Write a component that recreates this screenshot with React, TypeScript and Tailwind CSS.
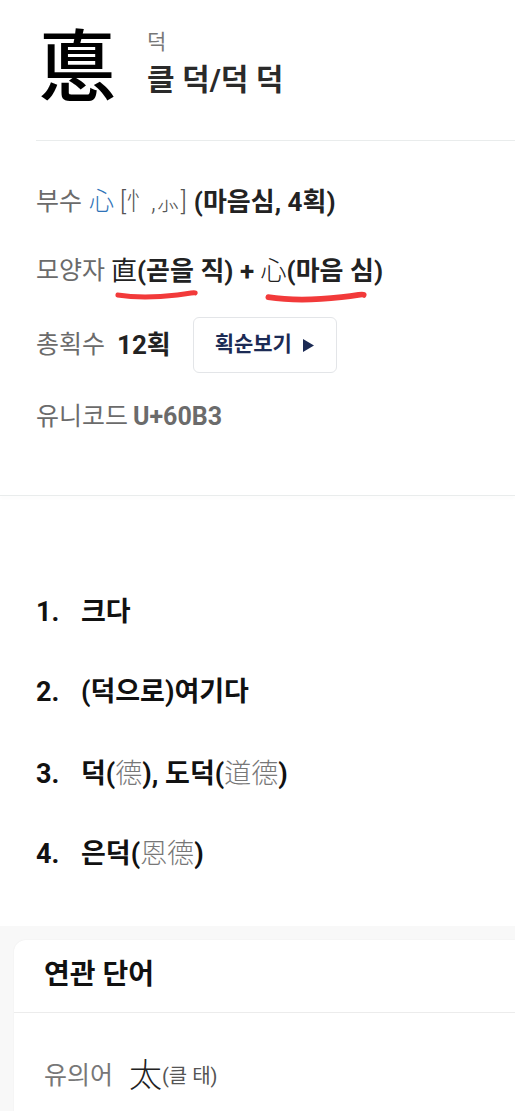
import React from "react";

const sans = "font-['Roboto','Noto_Sans_CJK_KR',sans-serif]";

// Red hand-drawn underline marks
const Scribble = ({ className }: { className: string }) => (
  <svg className={className} viewBox="0 0 100 12" preserveAspectRatio="none">
    <path
      d="M3 7 C 25 10, 55 9, 75 7 S 95 4, 97 5"
      fill="none"
      stroke="#f23a3a"
      strokeWidth="5"
      strokeLinecap="round"
    />
  </svg>
);

const meanings = [
  { no: "1.", parts: [{ t: "크다" }] },
  { no: "2.", parts: [{ t: "(덕으로)여기다" }] },
  {
    no: "3.",
    parts: [{ t: "덕(" }, { t: "德", h: true }, { t: "), 도덕(" }, { t: "道德", h: true }, { t: ")" }],
  },
  { no: "4.", parts: [{ t: "은덕(" }, { t: "恩德", h: true }, { t: ")" }] },
];

export default function App() {
  return (
    <div className={`w-[515px] min-h-[1111px] bg-white text-[#222] ${sans} overflow-hidden`}>
      {/* header */}
      <div className="flex items-start pl-[38px] pt-[22px] pb-[40px]">
        <div className="text-[78px] leading-none font-['Noto_Sans_CJK_KR',sans-serif] font-medium text-black">悳</div>
        <div className="ml-[31px] mt-[7px] flex flex-col">
          <span className="text-[21px] leading-[26px] text-[#777]">덕</span>
          <span className="mt-[8px] text-[30px] leading-[34px] font-bold text-[#2a2a2a]">클 덕/덕 덕</span>
        </div>
      </div>
      <div className="ml-[36px] h-px bg-[#e9ecec]" />

      {/* info */}
      <div className="px-[36px] pt-[45px] pb-[62px] text-[25px] flex flex-col">
        <div className="h-[32px] flex items-center">
          <span className="text-[#6b6b6b]">부수</span>
          <span className="ml-[7px] text-[#2f73b8] font-light">心</span>
          <span className="ml-[6px] text-[#555] font-light">[忄,⺗]</span>
          <span className="ml-[7px] text-[26px] font-bold">(마음심, 4획)</span>
        </div>
        <div className="relative mt-[37px] h-[32px] flex items-center">
          <span className="text-[#6b6b6b]">모양자</span>
          <span className="ml-[6px] text-[26px] font-bold">
            <span className="font-normal">直</span>(곧을 직) + <span className="font-light">心</span>(마음 심)
          </span>
          <Scribble className="absolute left-[79px] top-[33px] w-[83px] h-[12px]" />
          <Scribble className="absolute left-[229px] top-[34px] w-[102px] h-[14px]" />
        </div>
        <div className="mt-[30px] h-[56px] flex items-center">
          <span className="text-[#6b6b6b]">총획수</span>
          <span className="ml-[12px] text-[26px] font-bold">12획</span>
          <button className="ml-[22px] h-[56px] w-[144px] rounded-[6px] border border-[#e3e5e8] bg-white flex items-center justify-center gap-[10px] text-[21px] font-bold text-[#1c2b55]">
            획순보기
            <svg width="13" height="15" viewBox="0 0 13 15">
              <path d="M1 1 L12 7.5 L1 14 Z" fill="#1c2b55" />
            </svg>
          </button>
        </div>
        <div className="mt-[28px] h-[32px] flex items-center text-[#6b6b6b]">
          유니코드 <span className="ml-[5px] font-bold">U+60B3</span>
        </div>
      </div>
      <div className="h-px bg-[#e9ecec] shadow-[0_2px_3px_rgba(0,0,0,0.04)]" />

      {/* meanings */}
      <ol className="pl-[36px] pt-[99px] pb-[57px] flex flex-col gap-[46px]">
        {meanings.map((m) => (
          <li key={m.no} className="flex items-baseline h-[34px] text-[27px] leading-[34px] font-bold text-[#111]">
            <span className="w-[45px]">{m.no}</span>
            <span>
              {m.parts.map((p, i) =>
                p.h ? (
                  <span key={i} className="font-light text-[#777] font-['Noto_Sans_CJK_KR',serif]">
                    {p.t}
                  </span>
                ) : (
                  <span key={i}>{p.t}</span>
                )
              )}
            </span>
          </li>
        ))}
      </ol>

      {/* related words */}
      <div className="bg-[#f8f8f8] pt-[14px] pl-[14px]">
        <div className="bg-white rounded-tl-[12px] shadow-[0_0_2px_rgba(0,0,0,0.06)]">
          <div className="px-[30px] pt-[18px] pb-[20px] text-[28px] leading-[34px] font-bold text-[#111] border-b border-[#ececec]">
            연관 단어
          </div>
          <div className="px-[30px] pt-[47px] pb-[30px] h-[111px] flex items-start">
            <div className="h-[32px] flex items-center">
              <span className="text-[25px] text-[#777]">유의어</span>
              <span className="ml-[16px] text-[33px] font-light text-[#222]">太</span>
              <span className="text-[20px] text-[#555]">(클 태)</span>
            </div>
          </div>
        </div>
      </div>
    </div>
  );
}
